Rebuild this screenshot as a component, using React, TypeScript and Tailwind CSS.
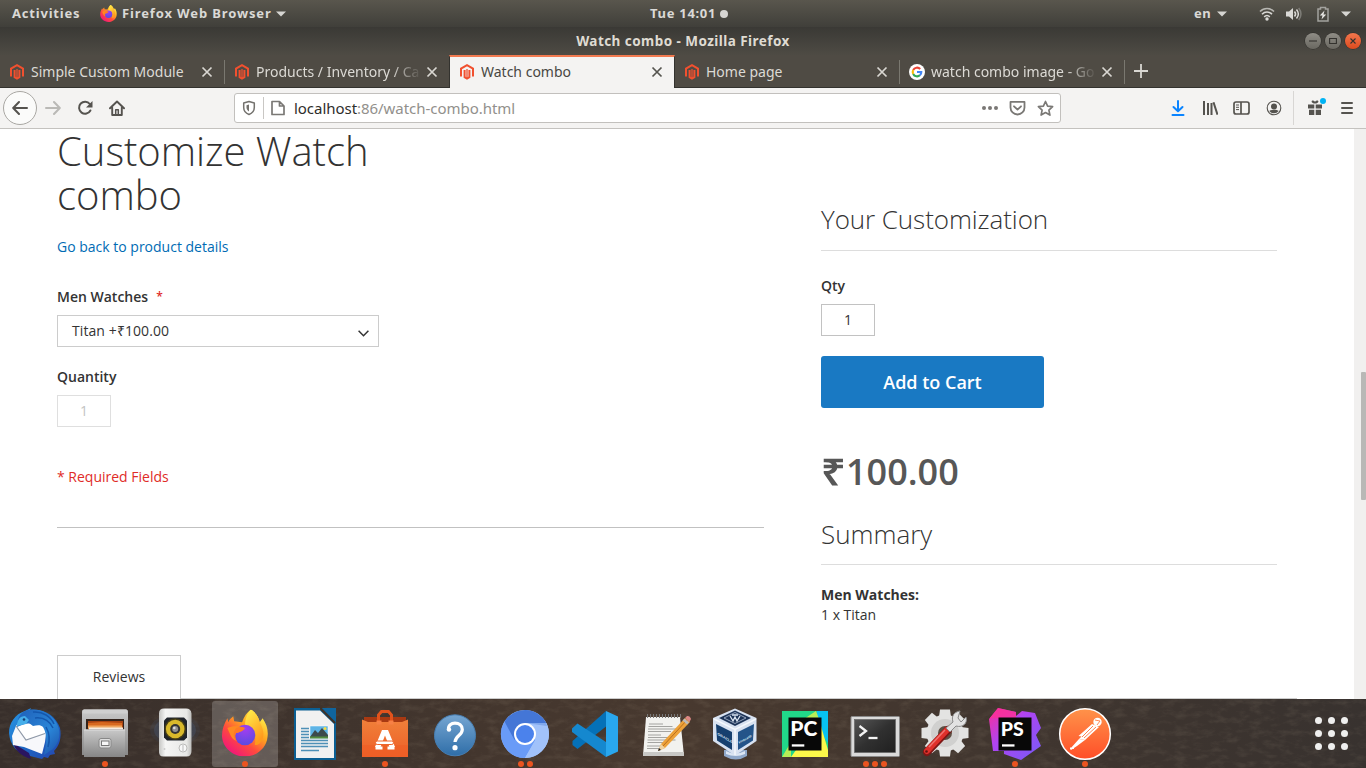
import type { ReactNode } from "react";

const UI = "font-['Noto_Sans','Open_Sans',sans-serif]";

function Caret({ className = "" }: { className?: string }) {
  return (
    <svg width="10" height="6" viewBox="0 0 10 6" className={className}>
      <path d="M0 .5h10L5 5.5z" fill="#d6d5d2" />
    </svg>
  );
}

function FirefoxLogo({ size }: { size: number }) {
  return (
    <svg width={size} height={size} viewBox="0 0 48 48" className="shrink-0">
      <defs>
        <linearGradient id="ffBody" x1="0.85" y1="0.1" x2="0.2" y2="0.95">
          <stop offset="0" stopColor="#fff04a" />
          <stop offset="0.35" stopColor="#ffa41f" />
          <stop offset="0.65" stopColor="#ff4a3e" />
          <stop offset="1" stopColor="#f0157c" />
        </linearGradient>
        <radialGradient id="ffCore" cx="0.5" cy="0.2" r="0.8">
          <stop offset="0" stopColor="#a43df0" />
          <stop offset="1" stopColor="#5a4be0" />
        </radialGradient>
        <linearGradient id="ffFlame" x1="0" y1="0" x2="0.5" y2="1">
          <stop offset="0" stopColor="#fff44f" />
          <stop offset="1" stopColor="#ff9a1c" />
        </linearGradient>
      </defs>
      <path d="M30 0c6 4 8 8 9 13l3-4c4 6 6 12 5 19-1 11-11 20-23 20S1 39 .5 27C.4 20 3 14 6 9l1 4c1-3 4-5 5-6l1 5 8 1c2-6 5-10 9-13z" fill="url(#ffBody)" />
      <path d="M30 0c6 4 8 8 9 13 3 5 5 11 3 17-2 5-6 7-8 6 2-9-1-17-10-19 0-7 2-12 6-17z" fill="url(#ffFlame)" />
      <circle cx="24" cy="26" r="10.5" fill="url(#ffCore)" />
      <path d="M6 19c5-3 11-2 15-1 1 2-1 5-6 6-2 2-2 5 0 8-5-2-6-6-9-13z" fill="#ff8a22" />
      <path d="M15 19c4-2 8-1 9 0-1 3-5 4-9 5-2 3 0 7 1 9-4-3-5-9-1-14z" fill="#ff7a26" />
    </svg>
  );
}

function Magento() {
  return (
    <svg width="16" height="16" viewBox="0 0 16 16" className="shrink-0" fill="none" stroke="#f1502f" strokeWidth="2">
      <path d="M2 12.5V4.6L8 1.2l6 3.4v7.9" />
      <path d="M5.6 6v7.2L8 14.6l2.400-1.400V6" />
      <path d="M8 5v9" strokeWidth="1.300" />
    </svg>
  );
}

function Google() {
  return (
    <svg width="16" height="16" viewBox="0 0 16 16" className="shrink-0" fill="none" strokeWidth="2.100">
      <circle cx="8" cy="8" r="8" fill="#fff" />
      <path d="M11.200 5A4.300 4.300 0 0 0 4.200 6" stroke="#ea4335" />
      <path d="M4.200 6a4.300 4.300 0 0 0 0 4" stroke="#fbbc05" />
      <path d="M4.200 10a4.300 4.300 0 0 0 6.700 1.300" stroke="#34a853" />
      <path d="M10.900 11.300A4.300 4.300 0 0 0 12.300 8H8" stroke="#4285f4" />
    </svg>
  );
}

function TabClose({ dark = false }: { dark?: boolean }) {
  return (
    <svg width="14" height="14" viewBox="0 0 14 14" className="shrink-0">
      <path d="M2.500 2.500l9 9M11.500 2.500l-9 9" stroke={dark ? "#55544f" : "#d9d7d2"} strokeWidth="1.700" />
    </svg>
  );
}

type TabProps = { icon: ReactNode; title: string; active?: boolean; divider?: boolean; fade?: boolean };

function Tab({ icon, title, active, divider, fade }: TabProps) {
  return (
    <div className={active ? "-ml-px flex h-[33px] w-[226px] items-center border-t-2 border-x border-t-[#f27a50] border-x-[#33322e] bg-[#f4f3f2] pb-0.5" : "flex h-[33px] w-[225px] items-center border-b border-[#33322e] pt-0.5"}>
      <div className="ml-[9px] flex flex-1 items-center">
        {icon}
        <div
          className={
            "ml-1.5 w-[169px] overflow-hidden whitespace-nowrap text-[14px] leading-5" +
            (active ? " text-[#484743]" : " text-[#dcdad5]") +
            (fade ? " [mask-image:linear-gradient(to_right,#000_135px,transparent_166px)]" : "")
          }
        >
          {title}
        </div>
        <TabClose dark={active} />
      </div>
      {divider && <div className="-ml-px h-6 w-px bg-[#7a7870]" />}
    </div>
  );
}

function TopBar() {
  return (
    <div className={"flex h-[27px] items-center bg-linear-to-b from-[#59564d] to-[#403f3a] text-[13px] font-bold text-[#dad9d6] " + UI}>
      <div className="ml-3 w-[88px] tracking-[0.8px]">Activities</div>
      <FirefoxLogo size={17} />
      <div className="ml-[5px] w-[149px] whitespace-nowrap tracking-[0.87px]">Firefox Web Browser</div>
      <Caret className="ml-[5px]" />
      <div className="ml-[364px] w-[68px] whitespace-nowrap tracking-[0.7px]">Tue 14:01</div>
      <div className="ml-[2px] size-2 rounded-full bg-[#d6d5d2]" />
      <div className="ml-[466px] w-[23px] tracking-[0.5px]">en</div>
      <Caret />
      <svg width="16" height="14" viewBox="0 0 16 14" className="ml-[32px]" fill="none" stroke="#dad9d6" strokeWidth="1.600">
        <path d="M1 4.500C5 .5 11 .5 15 4.500" opacity=".75" />
        <path d="M3 7.200c3-3 7-3 10 0M5.200 9.800c1.800-1.700 3.800-1.700 5.600 0" />
        <circle cx="8" cy="12" r="1.700" fill="#dad9d6" stroke="none" />
      </svg>
      <svg width="16" height="14" viewBox="0 0 16 14" className="ml-[11px]" fill="none" stroke="#dad9d6" strokeWidth="1.500">
        <path d="M0 4.500h3L7 1v12L3 9.500H0z" fill="#dad9d6" stroke="none" />
        <path d="M8.500 4.500c1.300 1.500 1.300 3.500 0 5M10.500 2.500c2.500 3 2.500 6 0 9" />
        <path d="M12.700 1c3 4 3 8 0 12" opacity=".35" />
      </svg>
      <svg width="12" height="16" viewBox="0 0 12 16" className="ml-[15px]">
        <path d="M3.500 1.500h5v1.500h2.500v12H1V3h2.500z" fill="none" stroke="#a3a29e" strokeWidth="1.500" />
        <path d="M7.500 4.500L2.800 9.500h2.700l-1 4 4.700-5H6.500z" fill="#e6e5e2" />
      </svg>
      <Caret className="ml-[12px]" />
    </div>
  );
}

function WindowButton({ close, children }: { close?: boolean; children: ReactNode }) {
  return (
    <div className={close ? "flex size-4 items-center justify-center rounded-full bg-linear-to-b from-[#f3764c] to-[#dc4a1c] shadow-[0_0_0_0.5px_#2d2c29]" : "flex size-4 items-center justify-center rounded-full bg-linear-to-b from-[#8f8d86] to-[#6a6861] shadow-[0_0_0_0.5px_#2d2c29]"}>
      <svg width="8" height="8" viewBox="0 0 8 8" fill="none" stroke="#33322e" strokeWidth="1.100">{children}</svg>
    </div>
  );
}

function TitleBar() {
  return (
    <div className={"grid h-7 grid-cols-[1fr_auto_1fr] items-center bg-linear-to-b from-[#3a3935] to-[#4e4b44] " + UI}>
      <div />
      <div className="text-[13.500px] font-bold tracking-[0.450px] text-[#dfdbd2]">Watch combo - Mozilla Firefox</div>
      <div className="mr-[5px] flex justify-end gap-1">
        <WindowButton><path d="M0 4h8" /></WindowButton>
        <WindowButton><path d="M.6 1.500h6.800v5H.6z" /></WindowButton>
        <WindowButton close><path d="M1.500 1.500l5 5M6.500 1.500l-5 5" /></WindowButton>
      </div>
    </div>
  );
}

function TabStrip() {
  return (
    <div className={"flex h-[33px] bg-[#4f4b44] " + UI}>
      <Tab icon={<Magento />} title="Simple Custom Module" divider />
      <Tab icon={<Magento />} title="Products / Inventory / Ca" fade />
      <Tab icon={<Magento />} title="Watch combo" active />
      <Tab icon={<Magento />} title="Home page" divider />
      <Tab icon={<Google />} title="watch combo image - Go" divider fade />
      <div className="flex flex-1 items-center border-b border-[#33322e] pl-[9px]">
        <svg width="14" height="14" viewBox="0 0 14 14"><path d="M7 0v14M0 7h14" stroke="#d9d7d2" strokeWidth="1.800" /></svg>
      </div>
    </div>
  );
}

function Toolbar() {
  return (
    <div className={"flex h-[41px] items-center border-b border-[#c4c2bf] bg-[#f4f3f2] " + UI}>
      <div className="ml-[3px] flex size-[34px] items-center justify-center rounded-full border border-[#a9a7a3] bg-[#fbfbfa]">
        <svg width="16" height="16" viewBox="0 0 16 16" fill="none" stroke="#55534f" strokeWidth="2" strokeLinecap="round" strokeLinejoin="round"><path d="M15 8H1.500M7 2L1.200 8 7 14" /></svg>
      </div>
      <svg width="16" height="16" viewBox="0 0 16 16" className="ml-2" fill="none" stroke="#bab9b6" strokeWidth="2" strokeLinecap="round" strokeLinejoin="round"><path d="M1 8h13.500M9 2l5.800 6L9 14" /></svg>
      <svg width="16" height="16" viewBox="0 0 16 16" className="ml-4" fill="none" stroke="#55534f" strokeWidth="2"><path d="M13.400 10.500A6 6 0 1 1 12.800 4" strokeLinecap="round" /><path d="M15.500 1v6.500H9z" fill="#55534f" stroke="none" /></svg>
      <svg width="16" height="16" viewBox="0 0 16 16" className="ml-4" fill="none" stroke="#55534f" strokeWidth="1.900" strokeLinejoin="round" strokeLinecap="round">
        <path d="M1 8.300L8 1.500l7 6.800M3.200 7.500V15h9.600V7.500" />
        <path d="M6.700 15V9.800h2.600V15" strokeWidth="1.500" />
      </svg>
      <div className="ml-[109px] flex h-[30px] w-[827px] items-center rounded-[3px] border border-[#c2c0bd] bg-white">
        <svg width="16" height="16" viewBox="0 0 16 16" className="ml-[6px]" fill="none" stroke="#74726e" strokeWidth="1.500">
          <path d="M8 1.500L13.300 3v4.500c0 3.500-2.300 5.800-5.300 7-3-1.200-5.300-3.500-5.300-7V3z" strokeLinejoin="round" />
          <path d="M8 4.500L5.500 5.300V7.500c0 1.800 1 3 2.500 4z" fill="#74726e" stroke="none" />
        </svg>
        <div className="ml-[6px] h-[22px] w-px bg-[#c9c7c4]" />
        <svg width="16" height="16" viewBox="0 0 16 16" className="ml-[6px]" fill="none" stroke="#7a7875" strokeWidth="1.700" strokeLinejoin="round"><path d="M2 1.500h7.500L14 6v8.500H2zM9.500 1.500V6H14" /></svg>
        <div className="ml-2 whitespace-nowrap text-[15px] tracking-[-0.04px] text-[#92908c]"><span className="text-[#2e2d2b]">localhost</span>:86/watch-combo.html</div>
        <svg width="18" height="6" viewBox="0 0 18 6" className="ml-auto" fill="#7a7875"><circle cx="3" cy="3" r="2" /><circle cx="9" cy="3" r="2" /><circle cx="15" cy="3" r="2" /></svg>
        <svg width="17" height="16" viewBox="0 0 17 16" className="ml-[10px]" fill="none" stroke="#7a7875" strokeWidth="1.800" strokeLinejoin="round" strokeLinecap="round">
          <path d="M1.500 1.900h14v5.600a7 7 0 0 1-14 0z" /><path d="M5 6.300l3.500 3.300L12 6.300" />
        </svg>
        <svg width="17" height="17" viewBox="0 0 17 17" className="mr-[6px] ml-[11px]" fill="none" stroke="#7a7875" strokeWidth="1.700" strokeLinejoin="round"><path d="M8.500 1.500l2.100 4.600 5 .6-3.700 3.400 1 5-4.400-2.500-4.400 2.500 1-5L1.400 6.700l5-.6z" /></svg>
      </div>
      <svg width="14" height="16" viewBox="0 0 14 16" className="ml-[110px]" fill="none" stroke="#0a84ff" strokeWidth="2" strokeLinejoin="round" strokeLinecap="round"><path d="M7 1v10M2.500 7L7 11.300 11.500 7M1.500 15h11" /></svg>
      <svg width="16" height="16" viewBox="0 0 16 16" className="ml-[17px]" stroke="#55534f" strokeWidth="2"><path d="M2 1v14M6 3v12M9.500 3v12M11.500 2.300l4 12.400" /></svg>
      <svg width="17" height="14" viewBox="0 0 17 14" className="ml-[15px]" fill="none" stroke="#55534f" strokeWidth="1.700"><rect x="1" y="1" width="15" height="12" rx="2" /><path d="M8 1v12" /><path d="M3 4h3M3 6.300h3M3 8.600h3" strokeWidth="1" /></svg>
      <svg width="16" height="16" viewBox="0 0 16 16" className="ml-4" fill="none" stroke="#55534f" strokeWidth="1.100"><circle cx="8" cy="8" r="6.800" /><circle cx="8" cy="6.500" r="3" fill="#55534f" stroke="none" /><path d="M3.300 11c1-1 2.800-1.300 4.700-1.300s3.700.3 4.700 1.300A6 6 0 0 1 8 13.300 6 6 0 0 1 3.300 11z" fill="#55534f" stroke="none" /></svg>
      <div className="ml-[11px] h-[34px] w-px bg-[#d8d6d4]" />
      <svg width="20" height="20" viewBox="0 0 20 20" className="-mt-1 ml-[13px]" fill="#55534f">
        <path d="M1 8.500h6.300v4H1zM8.700 8.500H15v4H8.700zM2 13.800h5.300V19H2zM8.700 13.800H14V19H8.700z" />
        <path d="M8 7.600C5 7.600 4 5.500 5 4.800s2 0 3 1c1-1 2-1.700 3-1s0 2.800-3 2.800z" />
        <circle cx="16" cy="5" r="3" fill="#00b3f4" />
      </svg>
      <svg width="12" height="12" viewBox="0 0 12 12" className="ml-[14px]" stroke="#55534f" strokeWidth="2" strokeLinecap="round"><path d="M1 1h10M1 6h10M1 11h10" /></svg>
    </div>
  );
}

function Page() {
  return (
    <div className="flex h-[570px] overflow-hidden bg-white font-['Open_Sans',sans-serif] text-[14px] leading-5 text-[#333]">
      <div className="flex w-[1354px] flex-col pl-[57px]">
        <div className="flex h-[526px]">
          <div className="w-[707px] shrink-0">
            <h1 className="w-[330px] text-[40px] leading-[44px] font-light tracking-[-0.03px]">Customize Watch combo</h1>
            <div className="mt-5 text-[#006bb4]">Go back to product details</div>
            <div className="mt-[30px] flex font-semibold">Men Watches<span className="ml-2 text-[12px] text-[#e02b27]">*</span></div>
            <div className="mt-2 flex h-8 w-[322px] items-center border border-[#ccc] pr-[9px] pl-[14px]">
              <span className="flex-1 tracking-[0.08px]">Titan +₹100.00</span>
              <svg width="11" height="7" viewBox="0 0 11 7" className="mt-1" fill="none" stroke="#333" strokeWidth="1.500"><path d="M.6.8l4.900 4.900L10.400.8" /></svg>
            </div>
            <div className="mt-5 font-semibold">Quantity</div>
            <div className="mt-2 flex h-8 w-[54px] items-center justify-center border border-[#dfdfdf] text-[#c3c3c3]">1</div>
            <div className="mt-10 text-[#e02b27]">* Required Fields</div>
            <div className="mt-10 h-px bg-[#c1c1c1]" />
          </div>
          <div className="ml-[57px] w-[456px]">
            <h2 className="mt-[76px] h-[46px] border-b border-[#ddd] text-[26px] leading-[29px] font-light tracking-[-0.08px]">Your Customization</h2>
            <div className="mt-[25px] font-semibold">Qty</div>
            <div className="mt-2 flex h-8 w-[54px] items-center justify-center border border-[#c2c2c2]">1</div>
            <div className="mt-5 flex h-[52px] w-[223px] items-center justify-center rounded-[3px] bg-[#1979c3] text-[18px] font-semibold text-white">Add to Cart</div>
            <div className="mt-[46px] flex text-[36px] leading-9 font-semibold text-[#575757]"><span className="w-[25px] origin-left scale-x-[1.2] font-extrabold">₹</span>100.00</div>
            <h2 className="mt-[30px] h-[45px] border-b border-[#ddd] text-[26px] leading-7 font-light">Summary</h2>
            <div className="mt-5 font-bold">Men Watches:</div>
            <div>1 x Titan</div>
          </div>
        </div>
        <div className="flex h-11 items-end">
          <div className="flex h-11 w-[124px] items-center justify-center border-x border-t border-[#ccc] pb-0.5">Reviews</div>
          <div className="h-px w-[1116px] bg-[#ccc]" />
        </div>
      </div>
      <div className="flex w-3 justify-end bg-[#f1f0ef]">
        <div className="mt-[243px] h-[128px] w-[5px] rounded-[1px] bg-[#b9b8b6]" />
      </div>
    </div>
  );
}

const LABEL_FONT = "Lato, 'Open Sans', sans-serif";

const dockIcons: { name: string; dots: number; focused?: boolean; art: ReactNode }[] = [
  {
    name: "thunderbird", dots: 0, art: (
      <>
        <defs>
          <linearGradient id="tb" x1="0" y1="0" x2="1" y2="1"><stop offset="0" stopColor="#2a9be8" /><stop offset=".5" stopColor="#1c68c4" /><stop offset="1" stopColor="#2546b0" /></linearGradient>
          <linearGradient id="tbWing" x1="0" y1="0" x2="1" y2="1"><stop offset="0" stopColor="#1f5fb8" /><stop offset=".6" stopColor="#2a86d8" /><stop offset="1" stopColor="#1d50a8" /></linearGradient>
        </defs>
        <path d="M31 9l-1 2c14-2 26 6 30 18 2 10-1 18-6 23l1 3-5 1-2 3-4-1-2 2-12-3C18 55 10 47 9 34c0-10 6-19 16-22z" fill="url(#tb)" />
        <path d="M13 44c2 7 8 13 18 16l-2-6z" fill="#2a1560" />
        <path d="M16 27l28 0 2 8-1 8-3 12-18-7-11-2-1-9z" fill="#f7f8fb" />
        <path d="M16 27l10 14 19-7-3-9-24-1z" fill="#fff" />
        <path d="M16 27l10 14 19-6.500" fill="none" stroke="#8f99a8" strokeWidth="1.200" />
        <path d="M25 12c-4 2-7 6-7 10l-1 6c4-2 7-3 12-4l4 3c5-1 8-1 10 1 4 6 4 15 1 28l9-6c6-6 8-15 5-23-4-11-20-20-33-15z" fill="url(#tbWing)" />
        <path d="M33 13c10-1 18 5 21 12M35 19c9-1 15 4 18 10M46 28c4 7 4 13 2 20" stroke="#1457ad" strokeWidth="1.500" fill="none" />
        <path d="M17 27c0-6 3-10 8-10l4 4-3 4z" fill="#45aeea" /><circle cx="24" cy="20.500" r="1.300" fill="#163d72" />
      </>
    ),
  },
  {
    name: "files", dots: 1, art: (
      <>
        <defs><linearGradient id="fl" x1="0" y1="0" x2="0" y2="1"><stop offset="0" stopColor="#c9c9c9" /><stop offset="1" stopColor="#868686" /></linearGradient></defs>
        <path d="M14 10.500h42q2 0 2 3V56h-3v2H14v-2h-2V13q0-2.500 2-2.500z" fill="url(#fl)" />
        <rect x="12.500" y="10.500" width="45" height="4" rx="1.500" fill="#cfcfcf" />
        <path d="M16 20h38v11H16z" fill="#33231b" /><path d="M18 22h35v8H18z" fill="#a84312" /><path d="M18 24l14-1 20 1v6H18z" fill="#d8691f" /><path d="M18 26.500h34v3H18z" fill="#efa55e" /><path d="M19 28.500h34v2H19z" fill="#f6ebdf" />
        <rect x="14" y="30.500" width="41" height="27.500" rx="1" fill="url(#fl)" />
        <path d="M14 31h41" stroke="#ddd" /><rect x="29" y="39.500" width="12" height="9.500" rx="2" fill="#ddd" stroke="#888" /><rect x="31.500" y="42" width="7.500" height="4.500" fill="#f7f7f7" stroke="#777" />
      </>
    ),
  },
  {
    name: "rhythmbox", dots: 0, art: (
      <>
        <defs><linearGradient id="rb" x1="0" y1="0" x2="1" y2="0"><stop offset="0" stopColor="#c5c5c3" /><stop offset=".2" stopColor="#f5f5f4" /><stop offset=".85" stopColor="#e8e8e6" /><stop offset="1" stopColor="#bdbdbb" /></linearGradient></defs>
        <ellipse cx="35" cy="31" rx="25" ry="16" fill="#3c4c68" opacity=".18" /><ellipse cx="35" cy="31" rx="21" ry="13" fill="#4b5f82" opacity=".3" />
        <path d="M24 9.500h22q5 0 5.500 5V52q0 5.500-5 5.500H23.500q-5 0-4.500-5.500V14.500q0-5 5-5z" fill="url(#rb)" />
        <path d="M27 18.500h17l3 3v17l-3 3H27l-3-3v-17z" fill="#20242b" /><circle cx="35.200" cy="30" r="10.700" fill="#453d16" /><circle cx="35.200" cy="30" r="9.300" fill="#d9b92b" /><circle cx="35.200" cy="30" r="5" fill="#343434" /><circle cx="35.200" cy="30" r="3" fill="#909090" /><circle cx="34.300" cy="29" r="1.300" fill="#ddd" />
        <circle cx="43" cy="49" r="4" fill="#f8f8f8" stroke="#bcbcba" /><path d="M43 46v6" stroke="#bbb" /><circle cx="24.500" cy="50" r="1" fill="#ccc" />
      </>
    ),
  },
  { name: "firefox", dots: 1, focused: true, art: <g transform="translate(11.500 10.500)"><svg width="47" height="47"><FirefoxLogo size={47} /></svg></g> },
  {
    name: "writer", dots: 0, art: (
      <>
        <path d="M14 9h28l14 14v38H14z" fill="#0b5f93" /><path d="M42 9h14v15z" fill="#10659e" /><path d="M41 8v2l14 14" fill="none" stroke="#3f3329" strokeWidth="2" />
        <path d="M16 11.500h24L54 25v34H16z" fill="#f1f1f1" />
        <path d="M21 29.500h8M21 32.500h8M21 35.500h8M21 38.500h8M21 41.500h27M21 44.500h27M21 47.500h27M21 51.500h18" stroke="#4e90b7" strokeWidth="1.500" />
        <rect x="30" y="27" width="18" height="12.500" fill="#5eb4e6" stroke="#fff" strokeWidth=".5" /><path d="M30 38l5-7 3 3 4-5 6 7v3z" fill="#3c4a4c" /><path d="M30 37.500h18v2H30z" fill="#538c3f" /><circle cx="45" cy="29.500" r="1.500" fill="#f5dc42" />
      </>
    ),
  },
  {
    name: "software", dots: 1, art: (
      <>
        <defs><linearGradient id="us" x1="0" y1="0" x2="0" y2="1"><stop offset="0" stopColor="#f0803a" /><stop offset="1" stopColor="#ee5f28" /></linearGradient></defs>
        <path d="M14 18h42v4l2 1v35H12V23l2-1z" fill="#a83912" /><path d="M12 20.500l6 2.500h34l6-2.500V58H12z" fill="url(#us)" /><path d="M12 46h46v12H12z" fill="#ee5d24" opacity=".6" />
        <path d="M28.500 25v-9l3-3.500h7l3 3.500v9" fill="none" stroke="#e2531c" strokeWidth="3" /><path d="M26.500 21.500h5v4h-5zM38.500 21.500h5v4h-5z" fill="#f78045" />
        <path d="M32 31h6l7 17h-5.500L35 36.500 30.500 48H25z" fill="#fff" />
        <rect x="25.500" y="42" width="18" height="3.500" rx="1.700" fill="#fff" stroke="#ee652b" strokeWidth="1" /><path d="M25.500 47.500h7v3h-7zM37.500 47.500h7v3h-7z" fill="#fff" />
      </>
    ),
  },
  {
    name: "help", dots: 0, art: (
      <>
        <defs><linearGradient id="hp" x1="0" y1="0" x2="0" y2="1"><stop offset="0" stopColor="#76a6d2" /><stop offset="1" stopColor="#2f6ea8" /></linearGradient></defs>
        <circle cx="35" cy="36.300" r="20.500" fill="url(#hp)" stroke="#467eb2" strokeWidth="1" />
        <path d="M28.500 31c-.5-5 3-6.800 6.500-6.800 4 0 7.300 2.300 7.300 6.300 0 6-6.800 6-7.300 12.500" fill="none" stroke="#fff" strokeWidth="3.200" /><circle cx="29" cy="30.500" r="2.200" fill="#fff" /><circle cx="35" cy="48.700" r="2.600" fill="#fff" />
      </>
    ),
  },
  {
    name: "chromium", dots: 2, art: (
      <>
        <circle cx="35" cy="35" r="24" fill="#a1c2fa" /><path d="M14.200 23A24 24 0 0 0 35 59l10.500-18.500L35 35z" fill="#699bf7" /><path d="M14.500 22.500a24 24 0 0 1 41.800 1.500H35L24.500 41z" fill="#4476d6" /><path d="M35 24h21.300A24 24 0 0 1 35 59l10.500-18z" fill="#a1c2fa" /><path d="M35 24h21l1 3z" fill="#80a8ed" />
        <circle cx="35" cy="35" r="11" fill="#fff" /><circle cx="35" cy="35" r="9" fill="#4b82ec" />
      </>
    ),
  },
  {
    name: "vscode", dots: 0, art: (
      <>
        <path d="M46 27.500L17.500 50l-5-4v-4L46 12z" fill="#0571b8" />
        <path d="M46 43L17.500 24.500l-5.500 5v3.500L46 58l3-8z" fill="#1588cf" /><path d="M46 12l12 5.500v35L46 58z" fill="#29a7ee" />
      </>
    ),
  },
  {
    name: "notes", dots: 0, art: (
      <>
        <path d="M16 18h34l4 39H13z" fill="#f2f2ef" /><path d="M13 53h41v4H13z" fill="#c8c8c5" /><path d="M17 17h34" stroke="#777" strokeWidth="4" strokeDasharray="1 2" />
        <path d="M19 25h14M18.500 27.500h24M18 30h29M18 32.500h23M18 36h13M18 38.500h24M17.500 41h28M17.500 43.500h22M17 47h18M17 49.500h13" stroke="#8f8f8d" strokeWidth=".8" />
        <path d="M28 52l3-7L55 19l5 4-25 26z" fill="#eda23a" /><path d="M31 45l4 4-7 3z" fill="#efd3a2" /><path d="M33 47L57 21" stroke="#b96f1e" /><path d="M55 19l2-2q3-.5 4 3l-1.500 3z" fill="#dc8784" /><path d="M52.500 21.500l4.500 4 2-2-4.500-4z" fill="#bbb" /><path d="M28 52l1-3 2 2z" fill="#222" />
      </>
    ),
  },
  {
    name: "virtualbox", dots: 0, art: (
      <>
        <path d="M24 51h23v6q-11 7-23 0z" fill="#90a9cb" /><path d="M26 52q9 5 19 0v3q-9 4-19 0z" fill="#dce6f3" />
        <path d="M35 9.500L56.500 19v23L35 56.500 13 42V19z" fill="#d8e2f1" /><path d="M35 11.500L51 19l-16 8-16-8z" fill="#1d3458" /><path d="M16 25l16 8v18L17 41.500z" fill="#17406f" /><path d="M54 25l-16 8v18l15-9.500z" fill="#245489" /><path d="M14 20l21 10.500L56 20M35 30.500V56" fill="none" stroke="#f4f8fc" strokeWidth="1.500" />
        <path d="M24 19l11-5.500L46 19l-11 5.500z" fill="none" stroke="#aebdd2" strokeWidth=".8" /><path d="M30 17l3 5 2-4 2 4 3-5M32 16h6" fill="none" stroke="#dce6f2" strokeWidth="1.300" />
        <text transform="matrix(1 .55 0 1 17.500 36)" fontFamily="Liberation Sans" fontSize="3.600" fontWeight="700" fill="#dbe6f3">ORACLE</text><text transform="matrix(1 -.55 0 1 38.500 45)" fontFamily="Liberation Sans" fontSize="3.400" fontWeight="700" fill="#dbe6f3">VirtualB</text>
      </>
    ),
  },
  {
    name: "pycharm", dots: 0, art: (
      <>
        <path d="M12 12h46v46H12z" fill="#21d789" /><path d="M47 12h11v32L45 24z" fill="#07c3f2" /><path d="M51 27l7 24v7H21l5-7z" fill="#fcf84a" /><path d="M34 20l12-8 3 8zM12 58l9-15v15z" fill="#b8ee58" />
        <path d="M18.500 18.500h33v33h-33z" fill="#080808" /><text x="20.300" y="37.300" fontFamily={LABEL_FONT} fontSize="21" fontWeight="900" fill="#fff">PC</text><path d="M21.800 45.300h12.500v2.300H21.800z" fill="#fff" />
      </>
    ),
  },
  {
    name: "terminal", dots: 3, art: (
      <>
        <defs><linearGradient id="tm" x1="0" y1="0" x2="1" y2="1"><stop offset="0" stopColor="#555" /><stop offset=".5" stopColor="#303030" /><stop offset="1" stopColor="#202020" /></linearGradient></defs>
        <rect x="11" y="17.500" width="48.500" height="40" rx="1" fill="#dadada" stroke="#898989" /><rect x="14.500" y="20.500" width="41" height="33" fill="url(#tm)" stroke="#666" strokeWidth=".7" />
        <path d="M19.500 27l6.500 5-6.500 5" fill="none" stroke="#f4f4f4" strokeWidth="2.300" /><path d="M28.500 39h9" stroke="#f4f4f4" strokeWidth="2.300" />
      </>
    ),
  },
  {
    name: "settings", dots: 0, art: (
      <>
        <g transform="translate(35 34)"><g fill="#e3e3e2">{[0, 45, 90, 135, 180, 225, 270, 315].map((a) => <path key={a} transform={`rotate(${a})`} d="M-5-23.500H5L6-16H-6z" />)}</g><circle r="18.500" fill="#e3e3e2" /><circle r="14" fill="#d0d0cf" /><circle r="7" fill="#5d4e43" /></g>
        <path d="M17 53l21-22" stroke="#7d1715" strokeWidth="8" strokeLinecap="round" /><path d="M17 52l20-21" stroke="#df302b" strokeWidth="6" strokeLinecap="round" /><path d="M19 48l16-17" stroke="#ef7470" strokeWidth="1.500" /><circle cx="16.500" cy="52.500" r="1.300" fill="#641210" />
        <path d="M36 29l7-6c-2-6 1-10 7-11l-2 7 3 4 5-5c2 6-3 11-10 9l-6 6z" fill="#e2e2e2" stroke="#898989" />
      </>
    ),
  },
  {
    name: "phpstorm", dots: 1, art: (
      <>
        <defs><linearGradient id="ps" x1="0" y1="0" x2="1" y2="1"><stop offset="0" stopColor="#fc2d95" /><stop offset=".4" stopColor="#b044f2" /><stop offset="1" stopColor="#755bf7" /></linearGradient></defs>
        <path d="M9 20l9-11 18 4v4l6-5 13 2 6 15-5 7 5 11-20 14-17-6v-3H13z" fill="url(#ps)" /><path d="M10 19l8-10 18 4v7z" fill="#fb3099" opacity=".8" />
        <path d="M18.500 18.500h33v33h-33z" fill="#080808" /><text x="20.700" y="37" fontFamily={LABEL_FONT} fontSize="19.500" fontWeight="900" fill="#fff">PS</text><path d="M22 45.300h12.500v2.300H22z" fill="#fff" />
      </>
    ),
  },
  {
    name: "postman", dots: 1, art: (
      <>
        <defs><linearGradient id="pm" x1="0" y1="0" x2="0" y2="1"><stop offset="0" stopColor="#ff934a" /><stop offset="1" stopColor="#ff4e28" /></linearGradient></defs>
        <circle cx="35" cy="35" r="25.300" fill="url(#pm)" stroke="#fff" strokeWidth="1.500" /><circle cx="47.500" cy="23" r="4.200" fill="#fff" /><path d="M45 21l5 1-3 4" fill="none" stroke="#ff8047" strokeWidth=".9" />
        <path d="M42 25L28.500 37l3 .5-2.500 2.500 6 1 14-13z" fill="#fff" /><path d="M43 27L32 38M46 28L34 39" stroke="#ff7642" strokeWidth=".9" /><path d="M29 40l6 1-8 6-6 4-1-1zM20 48.500h4v1.500h-4z" fill="#fff" />
      </>
    ),
  },
];

function Dock() {
  return (
    <div className="relative h-[69px] overflow-hidden bg-linear-to-r from-[#382f2b] via-[#48392f] to-[#38322f]">
      <svg width="1366" height="69" className="absolute inset-0 opacity-10">
        <filter id="grain"><feTurbulence type="fractalNoise" baseFrequency="0.08 0.16" numOctaves="4" seed="8" /><feColorMatrix values="0 0 0 0 .52  0 0 0 0 .43  0 0 0 0 .31  2.500 0 0 0 -1.100" /></filter>
        <rect width="1366" height="69" filter="url(#grain)" />
      </svg>
      <div className="relative flex h-full items-center">
        {dockIcons.map((icon) => (
          <div key={icon.name} className="relative h-[69px] w-[70px] shrink-0">
            {icon.focused && <div className="absolute top-0.5 left-0.5 h-[66px] w-[66px] rounded-[3px] bg-white/20" />}
            <svg width="70" height="69" viewBox="0 0 70 69" className="relative">{icon.art}</svg>
            <div className="absolute bottom-[1px] left-0 flex w-[70px] justify-center gap-[3px]">
              {Array.from({ length: icon.dots }, (_, i) => <div key={i} className="size-1.5 rounded-full bg-[#ea5420]" />)}
            </div>
          </div>
        ))}
        <div className="mr-[18px] ml-auto grid grid-cols-3 gap-[6px]">
          {Array.from({ length: 9 }, (_, i) => <div key={i} className="size-[7px] rounded-full bg-[#efefee]" />)}
        </div>
      </div>
    </div>
  );
}

export default function App() {
  return (
    <div className="flex h-[768px] w-[1366px] flex-col overflow-hidden">
      <TopBar />
      <TitleBar />
      <TabStrip />
      <Toolbar />
      <Page />
      <Dock />
    </div>
  );
}
